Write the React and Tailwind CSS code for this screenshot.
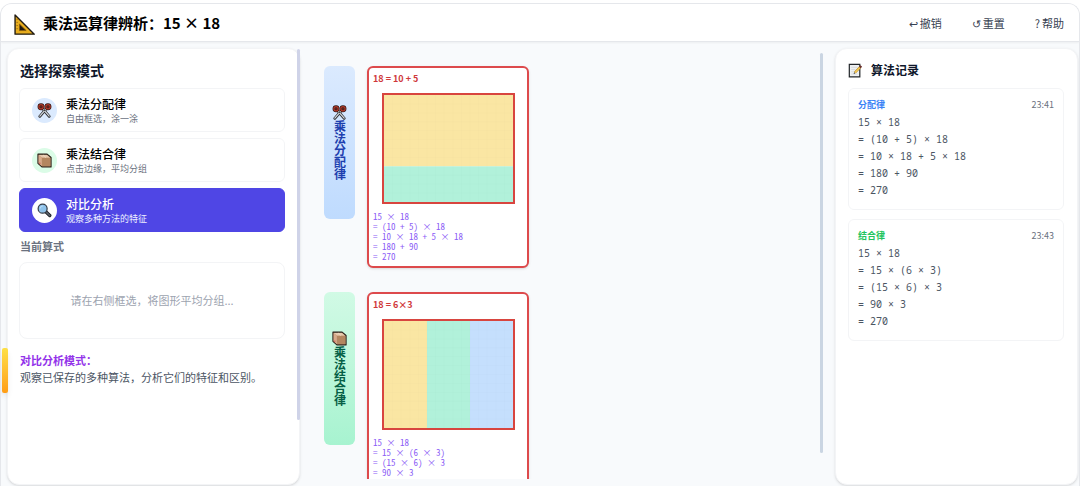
import React from "react";

function SetSquareIcon({ className }) {
  return (
    <svg viewBox="0 0 20 20" className={className} aria-hidden="true">
      <path d="M1 1 L19.3 19.2 H1 Z" fill="#e9ae1f" stroke="#1f1a12" strokeWidth="1.3" strokeLinejoin="round" />
      <path d="M5.2 9.6 L11.6 15.8 H5.2 Z" fill="#1d1710" stroke="#8a5d0c" strokeWidth="0.8" />
      <path d="M2.3 5 h1.4 M2.3 8 h1.4 M2.3 11 h1.4 M2.3 14 h1.4" stroke="#8a5d0c" strokeWidth="0.7" />
    </svg>
  );
}

function ScissorsIcon({ className }) {
  return (
    <svg viewBox="0 0 16 16" className={className} aria-hidden="true">
      <path d="M6 6 L13 14.2 M10 6 L3 14.2" stroke="#2a2a2e" strokeWidth="3" strokeLinecap="round" />
      <path d="M6.5 6.6 L13 14 M9.5 6.6 L3 14" stroke="#d5dade" strokeWidth="1.3" strokeLinecap="round" />
      <circle cx="4.3" cy="4" r="2.5" fill="#5b2620" stroke="#2d1512" strokeWidth="2.4" />
      <circle cx="11.7" cy="4" r="2.5" fill="#5b2620" stroke="#2d1512" strokeWidth="2.4" />
      <circle cx="4.3" cy="4" r="2.3" fill="none" stroke="#b0392a" strokeWidth="1.4" />
      <circle cx="11.7" cy="4" r="2.3" fill="none" stroke="#b0392a" strokeWidth="1.4" />
      <circle cx="8" cy="8" r="0.9" fill="#444" />
    </svg>
  );
}

function BoxIcon({ className }) {
  return (
    <svg viewBox="0 0 16 16" className={className} aria-hidden="true">
      <path d="M1 1.2 H10.8 L15 4.8 V14.8 H5.2 L1 11 Z" fill="#c69a76" stroke="#2c211a" strokeWidth="1.2" strokeLinejoin="round" />
      <path d="M1.8 2 H10.4 L13.8 4.9 H5.2 Z" fill="#e6c9ae" />
      <path d="M1.8 2.4 L5 5.2 V13.8 L1.8 10.8 Z" fill="#d8ab8c" />
      <path d="M5.4 5.3 H14.2 V14 H5.4 Z" fill="#b48660" />
      <path d="M6.4 2 L9.6 5" fill="none" stroke="#efdac4" strokeWidth="0.8" />
      <path d="M3 10.2 v1.6" stroke="#d0494c" strokeWidth="1" />
    </svg>
  );
}

function MagnifierIcon({ className }) {
  return (
    <svg viewBox="0 0 16 16" className={className} aria-hidden="true">
      <path d="M9.4 9.4 L13.6 13.4" stroke="#1d2228" strokeWidth="3.6" strokeLinecap="round" />
      <path d="M10.4 10.3 L13.5 13.3" stroke="#5c646d" strokeWidth="1.6" strokeLinecap="round" />
      <circle cx="6" cy="6" r="4.8" fill="#8fc3ea" stroke="#343c46" strokeWidth="1.3" />
      <path d="M3.4 5.4 A2.8 2.8 0 0 1 6 3.2" fill="none" stroke="#b9dcf5" strokeWidth="1.2" strokeLinecap="round" />
    </svg>
  );
}

function MemoIcon({ className }) {
  return (
    <svg viewBox="0 0 16 16" className={className} aria-hidden="true">
      <path d="M1.4 1.4 H12.6 V14.8 H1.4 Z" fill="#eef0f1" stroke="#23262a" strokeWidth="1.3" />
      <path d="M3.4 4.6 H10 M3.4 7 H8 M3.4 9.4 H7 M3.4 11.8 H10" stroke="#d3d7da" strokeWidth="0.9" />
      <path d="M7.4 10.2 L13 4.4" stroke="#a87a1c" strokeWidth="2.4" />
      <path d="M7.4 10.2 L12.8 4.6" stroke="#f3c64f" strokeWidth="1.8" />
      <path d="M12.6 4.8 L14.2 3.2" stroke="#6a2f2b" strokeWidth="2.6" />
      <path d="M6 11.6 l0.6 -1.8 1.2 1.2 Z" fill="#2b2b2b" />
    </svg>
  );
}

const modes = [
  { title: "乘法分配律", hint: "自由框选，涂一涂", Icon: ScissorsIcon, badge: "bg-blue-100" },
  { title: "乘法结合律", hint: "点击边缘，平均分组", Icon: BoxIcon, badge: "bg-green-100" },
  { title: "对比分析", hint: "观察多种方法的特征", Icon: MagnifierIcon, badge: "bg-white", active: true },
];

const actions = [
  { glyph: "↩", label: "撤销" },
  { glyph: "↺", label: "重置" },
  { glyph: "?", label: "帮助" },
];

const distributive = ["15 × 18", "= (10 + 5) × 18", "= 10 × 18 + 5 × 18", "= 180 + 90", "= 270"];
const associative = ["15 × 18", "= 15 × (6 × 3)", "= (15 × 6) × 3", "= 90 × 3", "= 270"];

const comparisons = [
  {
    name: "乘法分配律",
    Icon: ScissorsIcon,
    tab: "from-[#dbeafe] to-[#bfdbfe] text-[#1e40af]",
    formula: "18 = 10 + 5",
    parts: [
      { x: 0, y: 0, w: 150, h: 80, fill: "#fae6a3" },
      { x: 0, y: 80, w: 150, h: 40, fill: "#b1f1da" },
    ],
    lines: distributive,
  },
  {
    name: "乘法结合律",
    Icon: BoxIcon,
    tab: "from-[#d1fae5] to-[#a7f3d0] text-[#065f46]",
    formula: "18 = 6×3",
    parts: [
      { x: 0, y: 0, w: 50, h: 120, fill: "#fae6a3" },
      { x: 50, y: 0, w: 50, h: 120, fill: "#b1f1da" },
      { x: 100, y: 0, w: 50, h: 120, fill: "#c5dffd" },
    ],
    lines: associative,
  },
];

const records = [
  { name: "分配律", color: "text-[#3b82f6]", time: "23:41", lines: distributive },
  { name: "结合律", color: "text-[#22c55e]", time: "23:43", lines: associative },
];

function AreaModel({ parts, label }) {
  return (
    <svg
      viewBox="0 0 150 120"
      preserveAspectRatio="none"
      role="img"
      aria-label={label}
      className="block h-[111px] w-[133px] border-2 border-[#d8453f]"
    >
      {parts.map((p) => (
        <rect key={`${p.x}-${p.y}`} x={p.x} y={p.y} width={p.w} height={p.h} fill={p.fill} />
      ))}
      {Array.from({ length: 14 }, (_, i) => (
        <path key={`c${i}`} d={`M${(i + 1) * 10} 0V120`} stroke="#64748b" strokeOpacity="0.02" />
      ))}
      {Array.from({ length: 11 }, (_, i) => (
        <path key={`r${i}`} d={`M0 ${(i + 1) * 10}H150`} stroke="#64748b" strokeOpacity="0.02" />
      ))}
    </svg>
  );
}

function Comparison({ item }) {
  const { Icon } = item;
  return (
    <section className="flex items-start gap-3">
      <h3
        className={`flex h-[153px] w-[31px] shrink-0 flex-col items-center justify-center rounded-md bg-linear-to-b text-[12px] font-bold ${item.tab}`}
      >
        <Icon className="size-[15px]" />
        <span className="leading-3 [writing-mode:vertical-rl]">{item.name}</span>
      </h3>
      <article className="w-[162px] rounded-md border-2 border-[#dd4a4c] bg-white px-1 pt-[3px] pb-1 shadow-sm">
        <h4 className="text-[9px] leading-4 font-bold text-[#d0393b]">{item.formula}</h4>
        <div className="flex justify-center pt-1.5">
          <AreaModel parts={item.parts} label={item.formula} />
        </div>
        <div className="pt-2 font-['Noto_Sans_Mono_CJK_SC','Noto_Sans_CJK_SC',monospace] text-[9px] leading-[10px] text-[#8b5cf6]">
          {item.lines.map((line) => (
            <p key={line}>{line}</p>
          ))}
        </div>
      </article>
    </section>
  );
}

export default function App() {
  return (
    <div className="h-screen bg-white pt-[3px] font-['Noto_Sans_CJK_SC',sans-serif]">
      <div className="relative flex h-full flex-col overflow-hidden rounded-t-xl border-x border-t border-gray-200 bg-slate-50">
        <header className="flex h-[38px] shrink-0 items-center justify-between border-b border-gray-200 bg-white pr-[15px] pl-[13px] shadow-xs">
          <div className="flex items-center gap-2">
            <SetSquareIcon className="mt-1 size-[21px]" />
            <h1 className="text-[15px] leading-5 font-bold text-black">乘法运算律辨析：15 × 18</h1>
          </div>
          <nav className="flex gap-[30px]">
            {actions.map((a) => (
              <button key={a.label} type="button" className="flex items-center gap-0.5 text-[11px] leading-4 text-[#374151]">
                <span aria-hidden="true">{a.glyph}</span>
                {a.label}
              </button>
            ))}
          </nav>
        </header>

        <div className="flex min-h-0 flex-1 pt-1.5 pr-px pl-1.5">
          <aside className="relative mb-px w-[293px] shrink-0 rounded-xl border border-gray-100 bg-white pt-[11px] pr-[14px] pl-[11px] shadow-sm">
            <h2 className="pl-px text-[14px] leading-5 font-bold text-slate-900">选择探索模式</h2>
            <div className="mt-2 flex flex-col gap-1.5">
              {modes.map(({ title, hint, Icon, badge, active }) => (
                <button
                  key={title}
                  type="button"
                  aria-pressed={!!active}
                  className={`flex h-11 items-center gap-[9px] rounded-md border px-3 text-left ${
                    active ? "border-[#4f46e5] bg-[#4f46e5] text-white" : "border-gray-100 bg-white text-black"
                  }`}
                >
                  <span className={`flex size-[25px] items-center justify-center rounded-full ${badge}`}>
                    <Icon className="size-[15px]" />
                  </span>
                  <span className="flex flex-col">
                    <span className="text-[12px] leading-4 font-medium">{title}</span>
                    <span className={`text-[9px] leading-[13px] ${active ? "text-indigo-50" : "text-[#6b7280]"}`}>{hint}</span>
                  </span>
                </button>
              ))}
            </div>
            <h2 className="mt-1.5 pl-px text-[11px] leading-4 font-bold text-[#6b7280]">当前算式</h2>
            <div className="mt-2 flex h-[77px] items-center justify-center rounded-lg border border-gray-100 text-[11px] text-[#9ca3af]">
              请在右侧框选，将图形平均分组...
            </div>
            <div className="mt-[13px] pl-px text-[11px] leading-[17px] text-[#4b5563]">
              <p className="font-bold text-[#9333ea]">对比分析模式：</p>
              <p>观察已保存的多种算法，分析它们的特征和区别。</p>
            </div>
            <div className="absolute top-0 -right-px h-[371px] w-[3px] rounded-full bg-[#cfd3e8]" />
          </aside>

          <main className="relative mb-[7px] min-w-0 flex-1 overflow-hidden pt-[18px] pl-6">
            <div className="flex flex-col gap-6">
              {comparisons.map((item) => (
                <Comparison key={item.name} item={item} />
              ))}
            </div>
            <div className="absolute top-[5px] right-3 h-[400px] w-[3px] rounded-full bg-slate-300" />
          </main>

          <aside className="mb-px w-[243px] shrink-0 rounded-xl border border-gray-100 bg-white pt-3 pr-[13px] pl-3 shadow-sm">
            <h2 className="flex items-center gap-2 text-[12px] leading-[18px] font-bold text-slate-900">
              <MemoIcon className="size-[15px]" />
              算法记录
            </h2>
            <div className="mt-[9px] flex flex-col gap-[9px]">
              {records.map((r) => (
                <article key={r.name} className="h-[122px] rounded-md border border-gray-100 px-[9px] pt-2">
                  <div className="flex justify-between pb-px text-[9px] leading-4">
                    <h3 className={`font-bold ${r.color}`}>{r.name}</h3>
                    <time className="text-[#6b7280]">{r.time}</time>
                  </div>
                  <div className="font-['Noto_Sans_Mono','DejaVu_Sans_Mono',monospace] text-[10px] leading-[17px] text-[#4b5563]">
                    {r.lines.map((line) => (
                      <p key={line}>{line}</p>
                    ))}
                  </div>
                </article>
              ))}
            </div>
          </aside>
        </div>

        <div className="absolute top-[344px] left-px h-[45px] w-1.5 rounded-xs bg-linear-to-b from-[#fde047] to-[#ff9d14] shadow-md" />
      </div>
    </div>
  );
}
